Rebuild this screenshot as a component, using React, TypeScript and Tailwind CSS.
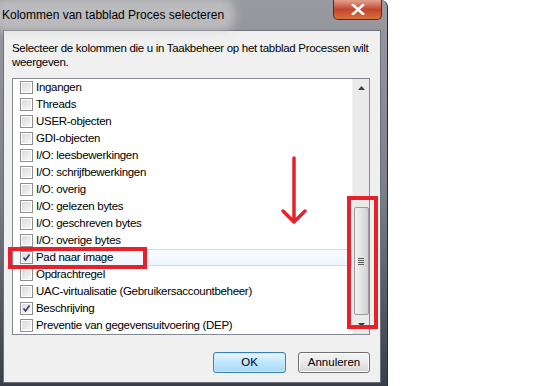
import React from "react";

const rows: { label: string; checked?: boolean; selected?: boolean }[] = [
  { label: "Ingangen" },
  { label: "Threads" },
  { label: "USER-objecten" },
  { label: "GDI-objecten" },
  { label: "I/O: leesbewerkingen" },
  { label: "I/O: schrijfbewerkingen" },
  { label: "I/O: overig" },
  { label: "I/O: gelezen bytes" },
  { label: "I/O: geschreven bytes" },
  { label: "I/O: overige bytes" },
  { label: "Pad naar image", checked: true, selected: true },
  { label: "Opdrachtregel" },
  { label: "UAC-virtualisatie (Gebruikersaccountbeheer)" },
  { label: "Beschrijving", checked: true },
  { label: "Preventie van gegevensuitvoering (DEP)" },
];

function CheckBox({ checked }: { checked?: boolean }) {
  return (
    <div className="w-[13px] h-[13px] border border-[#8e8f8f] bg-white p-[1px] shrink-0">
      <div className="relative w-full h-full bg-gradient-to-br from-[#dcdcdc] to-[#f6f6f6]">
        {checked && (
          <svg className="absolute inset-0" width="9" height="9" viewBox="0 0 9 9">
            <path d="M1.5 4.5 L3.5 7 L7.5 1.5" fill="none" stroke="#2a3c6e" strokeWidth="1.6" />
          </svg>
        )}
      </div>
    </div>
  );
}

export default function App() {
  return (
    <div
      className="relative w-[533px] h-[386px] bg-white overflow-hidden"
      style={{ fontFamily: '"Liberation Sans", Arial, sans-serif' }}
    >
      {/* window */}
      <div className="w-[388px] h-[386px] flex flex-col rounded-tr-[7px] border-r border-[#2b2c33] bg-gradient-to-b from-[#9a9ba1] via-[#7d7f88] to-[#3a3d4a]">
        {/* title bar */}
        <div className="relative h-[30px] shrink-0 flex items-start">
          <div className="mt-[5px] pl-[2px] pr-[4px] h-[20px] flex items-center text-[12px] text-black bg-[#c9c9cb]/70 rounded-[6px] shadow-[0_0_10px_6px_rgba(205,205,208,0.7)]">
            Kolommen van tabblad Proces selecteren
          </div>
          <div className="absolute left-[333px] top-0 w-[49px] h-[20px] rounded-b-[5px] border border-t-0 border-[#5a2a22] bg-gradient-to-b from-[#e4a08e] via-[#c2452d] to-[#d8703c] flex items-center justify-center">
            <svg width="14" height="11" viewBox="0 0 14 11">
              <path d="M2 1 L12 10 M12 1 L2 10" stroke="#ffffff" strokeWidth="2.6" strokeLinecap="square" />
            </svg>
          </div>
        </div>

        {/* client area */}
        <div className="ml-[3px] mr-[6px] mb-[3px] flex-1 flex flex-col bg-[#f0f0f0] border border-[#6d7078]">
          <div className="pl-[8px] pt-[10px] text-[11.5px] tracking-[-0.3px] leading-[14px] text-black whitespace-nowrap">
            <p>Selecteer de kolommen die u in Taakbeheer op het tabblad Processen wilt</p>
            <p>weergeven.</p>
          </div>

          {/* list */}
          <div className="ml-[8px] mt-[9px] w-[358px] h-[257px] flex border border-[#828790] bg-white">
            <div className="flex-1 flex flex-col">
              {rows.map((r) => (
                <div
                  key={r.label}
                  className={
                    "h-[17px] shrink-0 flex items-center gap-[3px] pl-[6px] text-[11.5px] tracking-[-0.3px] text-black " +
                    (r.selected ? "border border-[#c4dcf6] bg-gradient-to-b from-[#fafcff] to-[#eef5fd]" : "border border-transparent")
                  }
                >
                  <CheckBox checked={r.checked} />
                  <span className="whitespace-nowrap">{r.label}</span>
                </div>
              ))}
            </div>
            {/* scrollbar */}
            <div className="w-[17px] flex flex-col items-center bg-[#eaeaea] border-l border-[#f2f2f2]">
              <div className="h-[17px] flex items-center justify-center">
                <svg width="7" height="4" viewBox="0 0 7 4">
                  <path d="M0 4 L3.5 0 L7 4 Z" fill="#404040" />
                </svg>
              </div>
              <div className="flex-1" />
              <div className="w-[15px] h-[108px] rounded-[2px] border border-[#9b9b9b] bg-gradient-to-r from-[#f2f2f2] via-[#e3e3e3] to-[#cfcfcf] flex items-center justify-center">
                <div className="flex flex-col gap-[1px]">
                  <div className="w-[6px] h-[1px] bg-[#5a5a5a]" />
                  <div className="w-[6px] h-[1px] bg-[#5a5a5a]" />
                  <div className="w-[6px] h-[1px] bg-[#5a5a5a]" />
                  <div className="w-[6px] h-[1px] bg-[#5a5a5a]" />
                </div>
              </div>
              <div className="h-[19px] flex items-center justify-center">
                <svg width="7" height="4" viewBox="0 0 7 4">
                  <path d="M0 0 L7 0 L3.5 4 Z" fill="#404040" />
                </svg>
              </div>
            </div>
          </div>

          {/* buttons */}
          <div className="mt-[17px] flex justify-end gap-[12px] pr-[10px]">
            <button className="w-[73px] h-[21px] rounded-[3px] border border-[#3c7fb1] bg-gradient-to-b from-[#eaf6fd] via-[#bee6fd] to-[#a7d9f5] text-[11.5px] text-black shadow-[inset_0_0_0_1px_#c9eafd]">
              OK
            </button>
            <button className="w-[72px] h-[21px] rounded-[3px] border border-[#707070] bg-gradient-to-b from-[#f2f2f2] via-[#ebebeb] to-[#d6d6d6] text-[11.5px] text-black shadow-[inset_0_0_0_1px_#fcfcfc]">
              Annuleren
            </button>
          </div>
        </div>
      </div>

      {/* red annotations */}
      <div className="absolute left-[8px] top-[247px] w-[139px] h-[22px] border-[4px] border-[#e8202a]" />
      <div className="absolute left-[347px] top-[196px] w-[31px] h-[133px] border-[4px] border-[#e8202a]" />
      <svg className="absolute left-[280px] top-[156px]" width="30" height="70" viewBox="0 0 30 70">
        <path d="M14 2 L14 66 M3 55 L14 66 L25 55" fill="none" stroke="#e8202a" strokeWidth="3.5" strokeLinecap="round" strokeLinejoin="round" />
      </svg>
    </div>
  );
}
